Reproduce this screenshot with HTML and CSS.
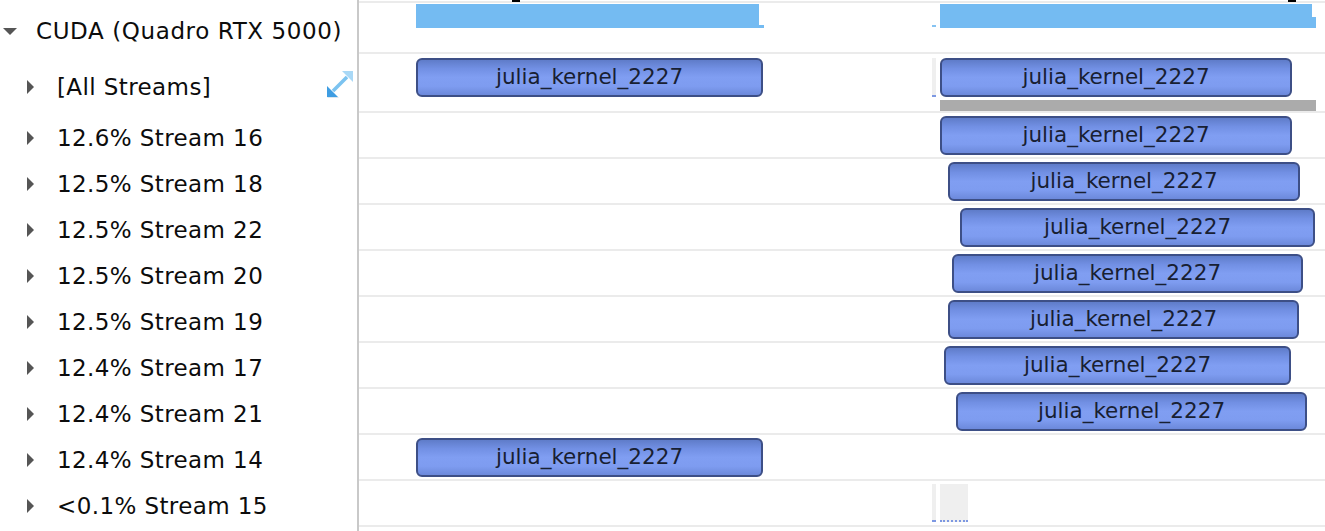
FILE: index.html
```html
<!DOCTYPE html>
<html lang="en">
<head>
<meta charset="utf-8">
<title>CUDA timeline</title>
<link rel="stylesheet" href="styles.css">
</head>
<body>
<div class="app">
  <aside class="tree">
    <div class="node row-device"><span class="tri-down"></span><span class="label label-device">CUDA (Quadro RTX 5000)</span></div>
    <div class="node row-all"><span class="tri-right"></span><span class="label">[All Streams]</span>
      <svg class="expand" viewBox="0 0 30 30" width="30" height="30">
        <line x1="8" y1="22" x2="22" y2="8" stroke="#7cc3f0" stroke-width="3.5"/>
        <polygon points="2,28 2,17 13,28" fill="#3e9de2"/>
        <polygon points="28,2 17,2 28,13" fill="#a9d8f6"/>
        <polygon points="2,29 13,29 14,28 3,28" fill="#d9e6ef"/>
      </svg>
    </div>
    <div class="node row-stream"><span class="tri-right"></span><span class="label">12.6% Stream 16</span></div>
    <div class="node row-stream"><span class="tri-right"></span><span class="label">12.5% Stream 18</span></div>
    <div class="node row-stream"><span class="tri-right"></span><span class="label">12.5% Stream 22</span></div>
    <div class="node row-stream"><span class="tri-right"></span><span class="label">12.5% Stream 20</span></div>
    <div class="node row-stream"><span class="tri-right"></span><span class="label">12.5% Stream 19</span></div>
    <div class="node row-stream"><span class="tri-right"></span><span class="label">12.4% Stream 17</span></div>
    <div class="node row-stream"><span class="tri-right"></span><span class="label">12.4% Stream 21</span></div>
    <div class="node row-stream"><span class="tri-right"></span><span class="label">12.4% Stream 14</span></div>
    <div class="node row-stream"><span class="tri-right"></span><span class="label">&lt;0.1% Stream 15</span></div>
  </aside>

  <main class="tracks">
    <span class="marker" style="left:153px"></span>
    <span class="marker" style="left:929px"></span>

    <div class="track track-device">
      <span class="usage" style="left:57px;width:343px"></span>
      <span class="usage step" style="left:400px;width:5px"></span>
      <span class="usage tick" style="left:573px;width:4px"></span>
      <span class="usage" style="left:581px;width:372px"></span>
      <span class="usage step-tall" style="left:953px;width:4px"></span>
    </div>

    <div class="track track-all">
      <div class="kernel k-all" style="left:57px;width:347px">julia_kernel_2227</div>
      <span class="sliver k-all" style="left:573px"></span>
      <div class="kernel k-all" style="left:581px;width:352px">julia_kernel_2227</div>
      <span class="busy" style="left:581px;width:376px"></span>
    </div>

    <div class="track track-stream"><div class="kernel" style="left:581px;width:352px">julia_kernel_2227</div></div>
    <div class="track track-stream"><div class="kernel" style="left:589px;width:352px">julia_kernel_2227</div></div>
    <div class="track track-stream"><div class="kernel" style="left:601px;width:355px">julia_kernel_2227</div></div>
    <div class="track track-stream"><div class="kernel" style="left:593px;width:351px">julia_kernel_2227</div></div>
    <div class="track track-stream"><div class="kernel" style="left:589px;width:351px">julia_kernel_2227</div></div>
    <div class="track track-stream"><div class="kernel" style="left:585px;width:347px">julia_kernel_2227</div></div>
    <div class="track track-stream"><div class="kernel" style="left:597px;width:351px">julia_kernel_2227</div></div>
    <div class="track track-stream"><div class="kernel" style="left:57px;width:347px">julia_kernel_2227</div></div>
    <div class="track track-stream">
      <span class="tiny" style="left:573px;width:4px"></span>
      <span class="tiny" style="left:581px;width:28px"></span>
    </div>
  </main>
</div>
</body>
</html>
```

FILE: styles.css
```css
html, body {
  margin: 0;
  padding: 0;
  background: #ffffff;
}

body {
  font-family: "DejaVu Sans", "Liberation Sans", sans-serif;
  color: #111111;
  overflow: hidden;
}

.app {
  display: flex;
  height: 531px;
  width: 1325px;
}

/* ---------- left tree ---------- */
.tree {
  flex: none;
  width: 357px;
  border-right: 2px solid #c9c9c9;
  display: flex;
  flex-direction: column;
}

.node {
  display: flex;
  align-items: center;
  box-sizing: border-box;
  padding-top: 3px;
}

.row-device { height: 54px; padding-top: 8px; }
.row-all { height: 59px; padding-top: 6px; }
.row-stream { height: 46px; }

.label {
  font-size: 23px;
  letter-spacing: 0.4px;
  white-space: nowrap;
  color: #0c0c0c;
}

.label-device { letter-spacing: 0.6px; }

.tri-down {
  width: 0;
  height: 0;
  border-left: 7px solid transparent;
  border-right: 7px solid transparent;
  border-top: 7px solid #555555;
  margin-left: 3px;
  margin-right: 19px;
}

.tri-right {
  width: 0;
  height: 0;
  border-top: 7px solid transparent;
  border-bottom: 7px solid transparent;
  border-left: 7px solid #555555;
  margin-left: 27px;
  margin-right: 23px;
}

.expand {
  margin-left: auto;
  margin-right: 2px;
  margin-top: -6px;
  flex: none;
}

/* ---------- right tracks ---------- */
.tracks {
  flex: 1;
  position: relative;
  margin-top: 1px;
  border-top: 2px solid #ebebeb;
  align-self: flex-start;
}

.marker {
  position: absolute;
  top: -3px;
  width: 8px;
  height: 2px;
  background: #000;
  z-index: 2;
}

.track {
  position: relative;
  border-bottom: 2px solid #ebebeb;
}

.track-device { height: 49px; }
.track-all { height: 57px; }
.track-stream { height: 44px; }

.usage {
  position: absolute;
  top: 1px;
  height: 24px;
  background: #74bbf2;
}

.usage.step { top: 22px; height: 3px; }
.usage.tick { top: 22px; height: 2px; background: #86c3f2; }
.usage.step-tall { top: 14px; height: 11px; }

.kernel {
  position: absolute;
  top: 3px;
  height: 39px;
  box-sizing: border-box;
  border: 2px solid #3d4f86;
  border-radius: 6px;
  background: linear-gradient(to bottom, #5f7cc9 0%, #7290e4 25%, #809ef2 50%, #7e9cf0 75%, #6c89db 100%);
  display: flex;
  align-items: center;
  justify-content: center;
  padding-bottom: 2px;
  font-size: 21.5px;
  color: #182032;
  white-space: nowrap;
  overflow: hidden;
}

.kernel.k-all { top: 4px; }

.sliver {
  position: absolute;
  top: 4px;
  width: 4px;
  height: 39px;
  box-sizing: border-box;
  background: #efefef;
  border-bottom: 2px solid #7d98e2;
}

.busy {
  position: absolute;
  top: 46px;
  height: 11px;
  background: #ababab;
}

.tiny {
  position: absolute;
  top: 3px;
  height: 38px;
  box-sizing: border-box;
  background: #efefef;
  border-bottom: 2px dotted #7d98e2;
}
```
